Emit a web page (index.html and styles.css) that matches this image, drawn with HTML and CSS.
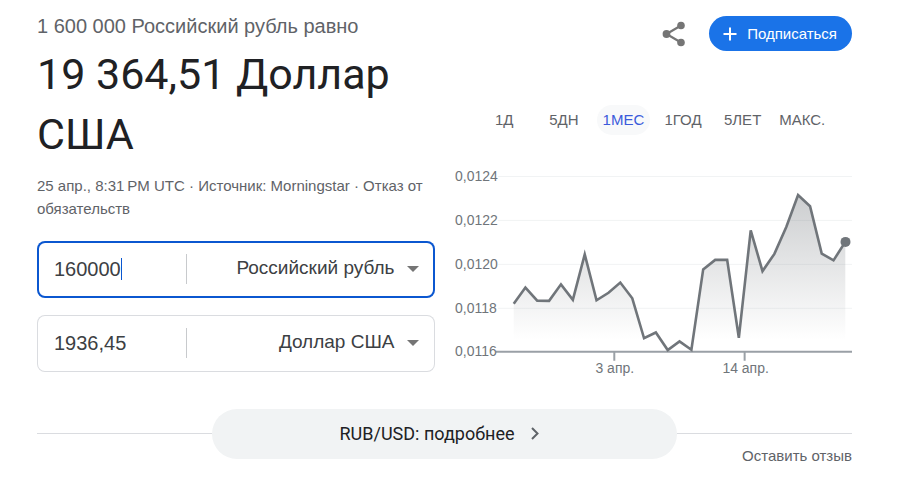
FILE: index.html
```html
<!DOCTYPE html>
<html lang="ru">
<head>
<meta charset="utf-8">
<meta name="viewport" content="width=device-width, initial-scale=1">
<title>Конвертер валют</title>
<link rel="stylesheet" href="styles.css">
</head>
<body>
<main class="card">
  <div class="columns">
    <section class="converter">
      <p class="source">1 600 000 Российский рубль равно</p>
      <h1 class="result">19 364,51 Доллар США</h1>
      <p class="meta">25 апр., 8:31&#8239;PM UTC · Источник: Morningstar · <a href="#">Отказ от обязательств</a></p>
      <form class="fields">
        <div class="field field-active">
          <div class="amount">
            <input class="amount-input" type="text" value="160000" aria-label="Сумма в исходной валюте">
            <span class="caret"></span>
          </div>
          <div class="currency">
            <select class="currency-select" aria-label="Исходная валюта"><option>Российский рубль</option><option>Доллар США</option></select>
            <svg class="arrow" viewBox="0 0 12 6" aria-hidden="true"><path d="M0 0h12L6 6z"/></svg>
          </div>
        </div>
        <div class="field">
          <div class="amount">
            <input class="amount-input" type="text" value="1936,45" aria-label="Сумма в целевой валюте">
          </div>
          <div class="currency">
            <select class="currency-select" aria-label="Целевая валюта"><option>Доллар США</option><option>Российский рубль</option></select>
            <svg class="arrow" viewBox="0 0 12 6" aria-hidden="true"><path d="M0 0h12L6 6z"/></svg>
          </div>
        </div>
      </form>
    </section>
    <section class="history">
      <div class="actions">
        <button class="share" type="button" aria-label="Поделиться">
          <svg class="share-icon" viewBox="0 0 24 26" aria-hidden="true"><path d="M19 4.500 4.500 13 19 21.500" fill="none" stroke="currentColor" stroke-width="2.200"/><circle cx="19" cy="4.500" r="3.800"/><circle cx="4.500" cy="13" r="3.900"/><circle cx="19" cy="21.500" r="3.800"/></svg>
        </button>
        <button class="subscribe" type="button">
          <svg class="plus" viewBox="0 0 14 14" aria-hidden="true"><path d="M7 .5v13M.5 7h13"/></svg>
          <span>Подписаться</span>
        </button>
      </div>
      <div class="periods">
        <button class="period" type="button">1Д</button>
        <button class="period" type="button">5ДН</button>
        <button class="period period-active" type="button">1МЕС</button>
        <button class="period" type="button">1ГОД</button>
        <button class="period" type="button">5ЛЕТ</button>
        <button class="period" type="button">МАКС.</button>
      </div>
      <svg class="chart" viewBox="0 0 398 220" role="img" aria-label="Курс рубля к доллару за месяц">
        <defs>
          <linearGradient id="fade" gradientUnits="userSpaceOnUse" x1="0" y1="34" x2="0" y2="180">
            <stop offset="0" stop-color="#70757a" stop-opacity=".36"/>
            <stop offset="1" stop-color="#70757a" stop-opacity="0"/>
          </linearGradient>
        </defs>
        <path class="grid-line" d="M43 16.500H398M43 60.500H398M43 104.500H398M43 148.500H398"/>
        <path fill="url(#fade)" d="M58.800 144 70.500 127.700 82.300 140.800 94.200 141 106.100 124.500 118 140 129.900 94.500 141.700 140.500 153.700 132.900 165.500 122.700 177.500 138.500 189.300 178.500 201.100 172.700 213 190.300 224.800 181.700 236.700 190 248.500 109.500 260.500 100 272.500 100 284.200 178 296.100 70.500 307.900 111.300 319.800 94 331.700 67 343.500 35 355.500 46.300 367.200 93.700 379 100.500 390.800 82V192H58.800z"/>
        <path class="axis" d="M41 192H398M159.500 192v9M290 192v9"/>
        <path class="line" d="M58.800 144 70.500 127.700 82.300 140.800 94.200 141 106.100 124.500 118 140 129.900 94.500 141.700 140.500 153.700 132.900 165.500 122.700 177.500 138.500 189.300 178.500 201.100 172.700 213 190.300 224.800 181.700 236.700 190 248.500 109.500 260.500 100 272.500 100 284.200 178 296.100 70.500 307.900 111.300 319.800 94 331.700 67 343.500 35 355.500 46.300 367.200 93.700 379 100.500 390.800 82"/>
        <circle class="point" cx="391" cy="82" r="5"/>
        <g class="labels">
          <text x="0" y="21">0,0124</text>
          <text x="0" y="65">0,0122</text>
          <text x="0" y="109">0,0120</text>
          <text x="0" y="153">0,0118</text>
          <text x="0" y="196">0,0116</text>
          <text class="date" x="160" y="213">3 апр.</text>
          <text class="date" x="291" y="213">14 апр.</text>
        </g>
      </svg>
    </section>
  </div>
  <div class="more-row">
    <a class="more" href="#">
      <span>RUB/USD: подробнее</span>
      <svg class="chevron" viewBox="0 0 8 13" aria-hidden="true"><path d="m1 1 5.500 5.500L1 12"/></svg>
    </a>
  </div>
  <a class="feedback" href="#">Оставить отзыв</a>
</main>
</body>
</html>
```
FILE: styles.css
```css
* {
  box-sizing: border-box;
}

body {
  margin: 0;
  background: #fff;
  color: #5f6368;
  font-family: "Liberation Sans", Arial, sans-serif;
}

a {
  color: inherit;
  text-decoration: none;
}

button {
  padding: 0;
  border: 0;
  background: none;
  color: inherit;
  font: inherit;
  cursor: pointer;
}

.card {
  display: flex;
  flex-direction: column;
  padding: 12px 47px 0 37px;
}

.columns {
  display: grid;
  grid-template-columns: 1fr 1fr;
  gap: 20px;
}

.source {
  margin: 0;
  font-size: 20px;
  line-height: 28px;
}

.result {
  margin: 4px 0 0;
  color: #202124;
  font-family: Roboto, sans-serif;
  font-size: 43px;
  font-weight: 400;
  line-height: 60px;
}

.meta {
  margin: 10px 0 0;
  font-size: 15px;
  line-height: 23px;
}

.fields {
  display: grid;
  gap: 17px;
  margin-top: 21px;
}

.field {
  display: grid;
  grid-template-columns: 150px 1fr;
  align-items: center;
  height: 57px;
  padding-bottom: 2px;
  border-radius: 8px;
  box-shadow: inset 0 0 0 1px #dadce0;
}

.field-active {
  box-shadow: inset 0 0 0 2px #0b57d0;
}

.amount {
  display: flex;
  align-items: center;
  height: 30px;
  padding-left: 17px;
  border-right: 1px solid #c8cacd;
}

.amount-input {
  field-sizing: content;
  padding: 2px 0 0;
  border: 0;
  outline: 0;
  background: none;
  color: #3c4043;
  font: 20px "Liberation Sans", Arial, sans-serif;
}

.caret {
  width: 1px;
  height: 22px;
  background: #0b57d0;
}

.currency {
  display: flex;
  align-items: center;
  gap: 12px;
  padding-right: 16px;
}

.currency-select {
  flex: 1;
  min-width: 0;
  padding: 0 0 2px;
  border: 0;
  outline: 0;
  appearance: none;
  background: none;
  color: #3c4043;
  font: 19px "Liberation Sans", Arial, sans-serif;
  text-align-last: right;
}

.arrow {
  width: 12px;
  height: 6px;
  fill: #757575;
}

.actions {
  display: flex;
  justify-content: flex-end;
  align-items: center;
  gap: 23px;
  padding-top: 4px;
}

.share {
  display: flex;
}

.share-icon {
  width: 24px;
  height: 26px;
  color: #757575;
  fill: currentColor;
}

.subscribe {
  display: flex;
  align-items: center;
  gap: 10px;
  height: 35px;
  padding: 0 15px 0 14px;
  border-radius: 18px;
  background: #1a73e8;
  color: #fff;
  font-size: 15px;
}

.plus {
  width: 14px;
  height: 14px;
  fill: none;
  stroke: #fff;
  stroke-width: 2;
}

.periods {
  display: grid;
  grid-template-columns: repeat(6, 1fr);
  justify-items: center;
  margin: 54px 20px 25px;
}

.period {
  height: 30px;
  padding: 0 6px 2px;
  border-radius: 15px;
  font-size: 15px;
}

.period-active {
  background: #f8f9fa;
  color: #3b5bdb;
}

.chart {
  display: block;
  width: 100%;
}

.grid-line {
  stroke: #f1f3f4;
}

.axis {
  fill: none;
  stroke: #9aa0a6;
  stroke-width: 2;
}

.line {
  fill: none;
  stroke: #70757a;
  stroke-width: 2.6;
}

.point {
  fill: #70757a;
}

.labels {
  fill: #70757a;
  font-size: 14px;
}

.date {
  text-anchor: middle;
}

.more-row {
  display: flex;
  align-items: center;
  margin-top: 29px;
}

.more-row::before,
.more-row::after {
  flex: 1;
  height: 1px;
  background: #dadce0;
  content: "";
}

.more {
  display: flex;
  justify-content: center;
  align-items: center;
  gap: 17px;
  width: 57%;
  height: 50px;
  padding-right: 10px;
  border-radius: 25px;
  background: #f1f3f4;
  color: #202124;
  font-family: Roboto, sans-serif;
  font-size: 18px;
}

.chevron {
  width: 8px;
  height: 13px;
  fill: none;
  stroke: #5f6368;
  stroke-width: 2;
}

.feedback {
  align-self: flex-end;
  margin-top: -12px;
  font-size: 15px;
  line-height: 18px;
}
```
